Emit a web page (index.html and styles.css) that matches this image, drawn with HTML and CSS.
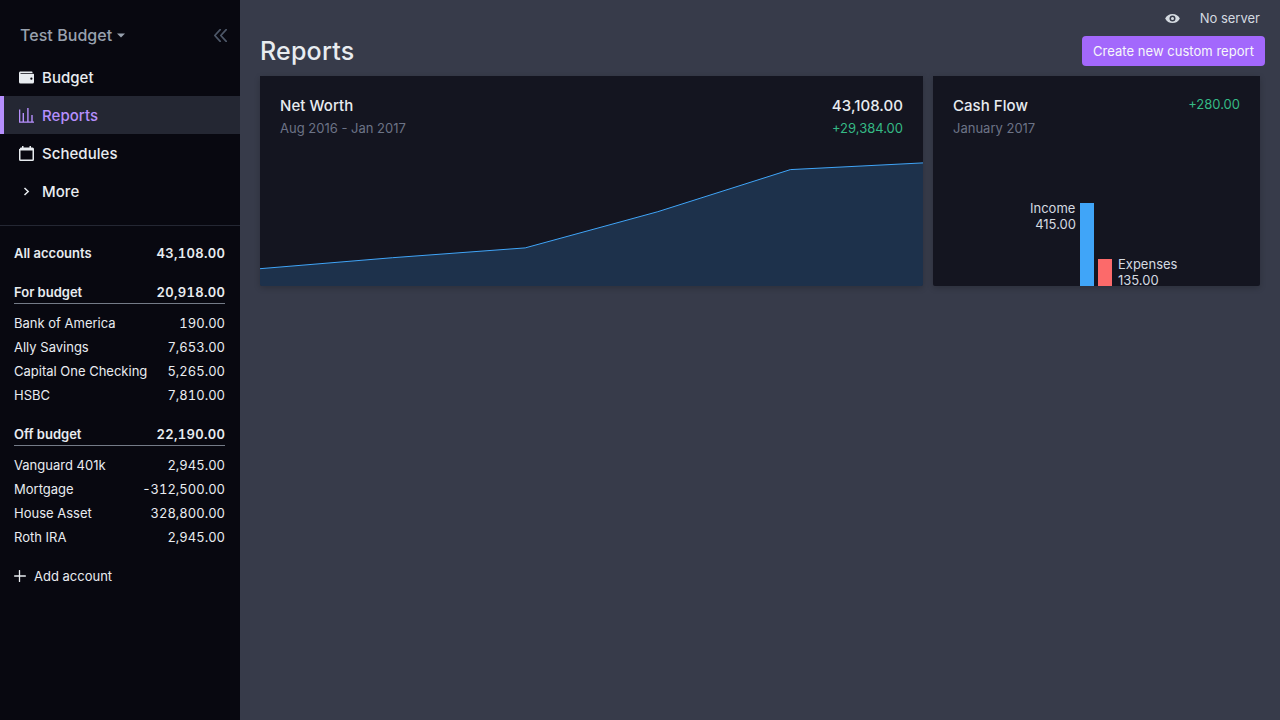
FILE: index.html
```html
<!DOCTYPE html>
<html lang="en">
<head>
<meta charset="utf-8">
<title>Reports</title>
<link rel="stylesheet" href="styles.css">
</head>
<body>
<div class="app">
  <aside class="sidebar">
    <div class="budget-head">
      <span class="budget-name">Test Budget</span>
      <svg class="caret" width="8" height="7" viewBox="0 0 8 7"><path d="M0 1.500h8L4 5.500z" fill="currentColor"/></svg>
      <svg class="collapse" width="13" height="13" viewBox="0 0 13 13" fill="none" stroke="currentColor" stroke-width="1.700" stroke-linecap="round" stroke-linejoin="round"><path d="M6.200.7.8 6.500l5.400 5.800M12.200.7 6.800 6.500l5.400 5.800"/></svg>
    </div>
    <nav class="nav">
      <a class="nav-item"><svg width="15" height="15" viewBox="0 0 20 20" fill="currentColor"><path d="M0 4c0-1.100.9-2 2-2h15a1 1 0 0 1 1 1v1H2v1h17a1 1 0 0 1 1 1v10a2 2 0 0 1-2 2H2a2 2 0 0 1-2-2V4zm16.500 9a1.500 1.500 0 1 0 0-3 1.500 1.500 0 0 0 0 3z"/></svg>Budget</a>
      <a class="nav-item active"><svg width="15" height="15" viewBox="0 0 15 15" fill="currentColor"><path d="M0 1.500h1.300v12H15v1.200H0zM3.600 5H5v8.500H3.600zM8.200 0h1.400v13.500H8.200zM12.300 7h1.400v6.500h-1.400z"/></svg>Reports</a>
      <a class="nav-item"><svg width="15" height="15" viewBox="0 0 20 20" fill="currentColor"><path d="M1 4c0-1.100.9-2 2-2h1V0h2v2h8V0h2v2h2a2 2 0 0 1 2 2v14a2 2 0 0 1-2 2H2a2 2 0 0 1-2-2V4zm1 2v12h16V6z"/></svg>Schedules</a>
      <a class="nav-item"><svg width="15" height="15" viewBox="0 0 15 15" fill="none" stroke="currentColor" stroke-width="1.500"><path d="m5.500 4 3.700 3.500L5.500 11"/></svg>More</a>
    </nav>
    <div class="accounts">
      <div class="acct total"><span>All accounts</span><span class="num">43,108.00</span></div>
      <div class="acct group"><span>For budget</span><span class="num">20,918.00</span></div>
      <div class="acct"><span>Bank of America</span><span class="num">190.00</span></div>
      <div class="acct"><span>Ally Savings</span><span class="num">7,653.00</span></div>
      <div class="acct"><span>Capital One Checking</span><span class="num">5,265.00</span></div>
      <div class="acct"><span>HSBC</span><span class="num">7,810.00</span></div>
      <div class="acct group"><span>Off budget</span><span class="num">22,190.00</span></div>
      <div class="acct"><span>Vanguard 401k</span><span class="num">2,945.00</span></div>
      <div class="acct"><span>Mortgage</span><span class="num">-312,500.00</span></div>
      <div class="acct"><span>House Asset</span><span class="num">328,800.00</span></div>
      <div class="acct"><span>Roth IRA</span><span class="num">2,945.00</span></div>
      <div class="add"><svg width="12" height="12" viewBox="0 0 12 12" stroke="currentColor" stroke-width="1.300" stroke-linecap="round"><path d="M5.500.6v10.800M.6 6h10.800"/></svg>Add account</div>
    </div>
  </aside>
  <main class="main">
    <div class="topbar">
      <svg width="15" height="15" viewBox="0 0 20 20" fill="currentColor"><path d="M.2 10a11 11 0 0 1 19.600 0A11 11 0 0 1 .2 10zm9.800 4a4 4 0 1 0 0-8 4 4 0 0 0 0 8zm0-2a2 2 0 1 1 0-4 2 2 0 0 1 0 4z"/></svg>
      <span>No server</span>
    </div>
    <div class="title-row"><h1 class="title">Reports</h1><button class="create">Create new custom report</button></div>
    <div class="cards">
      <section class="card net-worth">
        <div class="card-head">
          <div><h2 class="card-title">Net Worth</h2><div class="card-date">Aug 2016 - Jan 2017</div></div>
          <div class="figures"><div class="card-title">43,108.00</div><div class="change">+29,384.00</div></div>
        </div>
        <svg class="area" width="663" height="136" viewBox="0 0 663 136"><path d="M0 118.700 132.600 107.700 265.200 97.900 397.800 61.700 530.400 19.600 663 12.900V136H0z" fill="#40a5f8" fill-opacity=".2"/><path d="M0 118.700 132.600 107.700 265.200 97.900 397.800 61.700 530.400 19.600 663 12.900" fill="none" stroke="#40a5f8"/></svg>
      </section>
      <section class="card cash-flow">
        <div class="card-head">
          <div><h2 class="card-title">Cash Flow</h2><div class="card-date">January 2017</div></div>
          <div class="change">+280.00</div>
        </div>
        <div class="bars">
          <div class="bar-label income-label"><div class="income-name">Income</div><div>415.00</div></div>
          <div class="bar income"></div>
          <div class="bar expenses"></div>
          <div class="bar-label expenses-label"><div>Expenses</div><div>135.00</div></div>
        </div>
      </section>
    </div>
  </main>
</div>
</body>
</html>
```
FILE: styles.css
```css
* { box-sizing: border-box; }
body {
  margin: 0;
  font-family: Inter, "Liberation Sans", sans-serif;
  font-size: 13px;
  line-height: 16px;
  color: #e8ecf0;
}
.app { display: flex; height: 720px; overflow: hidden; background: #373b4a; }
.sidebar { width: 240px; background: #080810; flex: none; }
.budget-head { display: flex; align-items: center; height: 36px; margin-top: 17px; padding: 0 13px 0 20px; color: #98a1ae; }
.budget-name { font-size: 16px; font-weight: 500; letter-spacing: 0.05px; }
.caret { margin-left: 5px; }
.collapse { margin-left: auto; color: #4d5768; }
.nav { margin-top: 5px; padding-bottom: 15px; border-bottom: 1px solid #242733; }
.nav-item { display: flex; align-items: center; gap: 8px; height: 38px; padding: 1px 0 0 19px; font-size: 15px; line-height: 19px; font-weight: 500; letter-spacing: 0.04px; }
.nav-item.active { padding-left: 15px; border-left: 4px solid #b68ffd; background: #242733; color: #b68ffd; }
.accounts { padding: 15px 15px 0 14px; }
.acct { display: flex; justify-content: space-between; align-items: center; height: 24px; }
.num { font-variant-numeric: tabular-nums; }
.total, .group { font-weight: 600; }
.total .num, .group .num { margin-right: -0.3px; letter-spacing: 0.32px; }
.group { height: 23px; margin: 16px 0 7px; border-bottom: 1px solid #747b87; }
.add { display: flex; align-items: center; gap: 8px; height: 24px; margin-top: 15px; }
.main { flex: 1; min-width: 0; padding: 0 20px; }
.topbar { display: flex; align-items: center; justify-content: flex-end; gap: 20px; height: 36px; color: #d4dae0; }
.title-row { display: flex; justify-content: space-between; align-items: center; height: 30px; margin-right: -5px; }
.title { margin: 0; font-size: 25px; line-height: 30px; font-weight: 500; letter-spacing: 0.2px; }
.create { width: 183px; height: 30px; padding: 0; border: 0; border-radius: 4px; background: #a368fc; color: #f6f8fa; font: inherit; letter-spacing: 0.03px; }
.cards { display: flex; gap: 10px; margin-top: 10px; }
.card { display: flex; flex-direction: column; justify-content: space-between; height: 210px; border-radius: 0 0 2px 2px; overflow: hidden; background: #141520; box-shadow: 0 2px 6px rgba(0, 0, 0, .2); }
.net-worth { width: 663px; }
.cash-flow { width: 327px; }
.card-head { display: flex; justify-content: space-between; padding: 20px 20px 0; }
.card-title { margin: 0 0 5px; font-size: 15px; line-height: 19px; font-weight: 500; letter-spacing: 0.05px; }
.card-date { color: #6c7386; }
.figures { text-align: right; }
.change { color: #35b985; }
.area { display: block; }
.bars { display: flex; align-items: flex-end; height: 83px; padding-left: 97px; color: #d4dae0; }
.bar { width: 14px; margin-right: 4px; }
.income { height: 83px; background: #40a5f8; }
.expenses { height: 27px; background: #fc6a6a; }
.bar-label { height: 86px; }
.income-label { width: 46px; margin-right: 4px; text-align: right; }
.income-name { padding-right: 1px; }
.expenses-label { height: 30px; margin-left: 2px; }
```
